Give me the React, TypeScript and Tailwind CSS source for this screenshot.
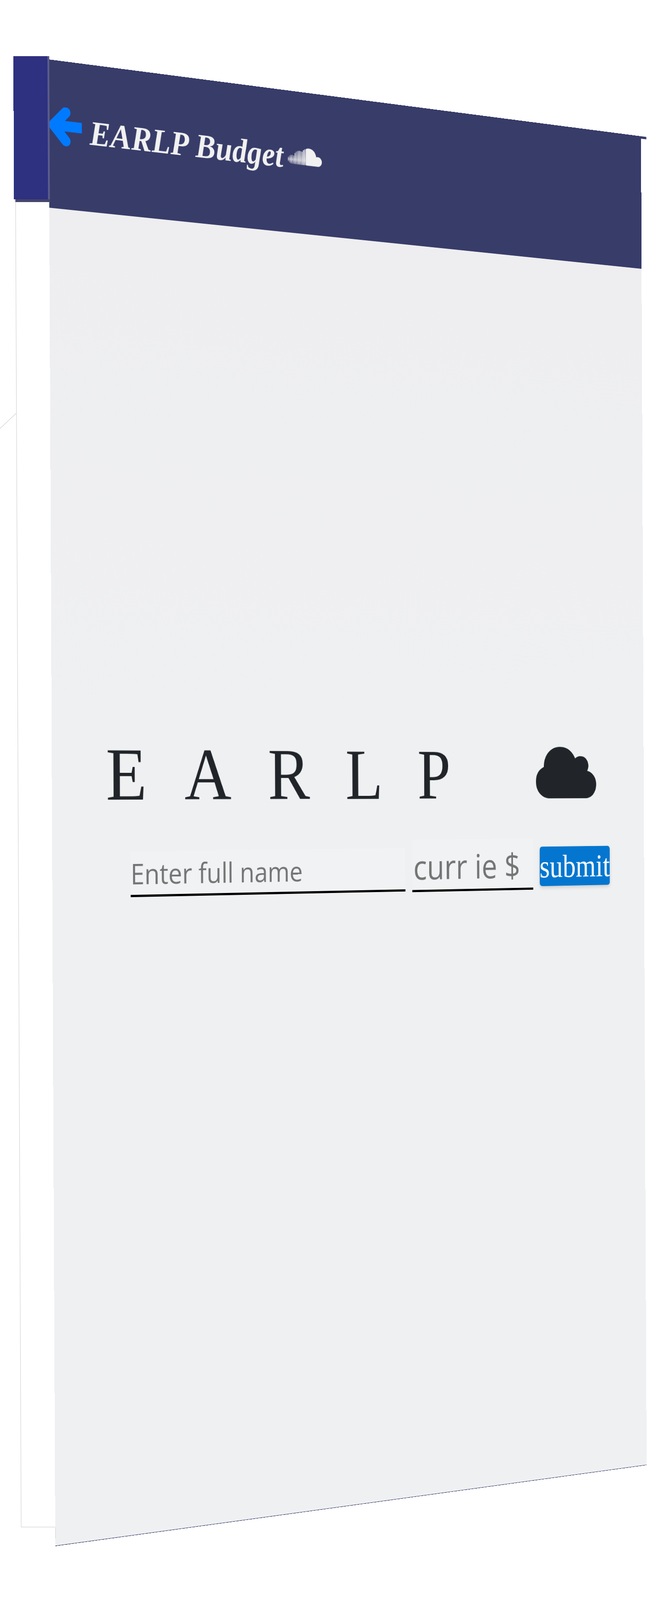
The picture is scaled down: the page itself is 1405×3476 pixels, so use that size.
import React from "react";
import { FaSoundcloud } from "react-icons/fa";

type Pt = [number, number];

// Maps a flat w×h box onto a four-cornered shape (TL, TR, BR, BL), as the tilted page in the picture.
function warp(w: number, h: number, ox: number, oy: number, q: Pt[]): string {
  const [x0, y0] = [q[0][0] - ox, q[0][1] - oy];
  const [x1, y1] = [q[1][0] - ox, q[1][1] - oy];
  const [x2, y2] = [q[2][0] - ox, q[2][1] - oy];
  const [x3, y3] = [q[3][0] - ox, q[3][1] - oy];
  const dx1 = x1 - x2, dx2 = x3 - x2, sx = x0 - x1 + x2 - x3;
  const dy1 = y1 - y2, dy2 = y3 - y2, sy = y0 - y1 + y2 - y3;
  const den = dx1 * dy2 - dx2 * dy1;
  const g = (sx * dy2 - dx2 * sy) / den;
  const k = (dx1 * sy - sx * dy1) / den;
  const a = x1 - x0 + g * x1, b = x3 - x0 + k * x3;
  const d = y1 - y0 + g * y1, e = y3 - y0 + k * y3;
  return `matrix3d(${a / w},${d / w},0,${g / w},${b / h},${e / h},0,${k / h},0,0,1,0,${x0},${y0},0,1)`;
}

const asideTransform = warp(74, 3196, 32, 122, [[32, 122], [106, 122], [119.5, 3318], [45.5, 3318]]);
const mainTransform = warp(1600, 3230, 106, 129, [[105.5, 129], [1392, 296], [1404, 3183], [120, 3359]]);

function BackArrow() {
  return (
    <svg viewBox="0 0 82 92" className="h-[92px] w-[82px] flex-none" fill="none" stroke="#007bff" strokeWidth="23">
      <path d="M41 11L11 41L41 73" strokeLinecap="round" strokeLinejoin="round" />
      <path d="M13 41H80" />
    </svg>
  );
}

function Cloud() {
  return (
    <svg viewBox="0 0 132 112" preserveAspectRatio="none" className="mb-[27px] ml-[148px] h-[123px] w-[178px] flex-none" fill="#212529">
      <path d="M30 112C12 112 0 96 0 76C0 60 6 50 17 44C17 18 32 0 52 0C68 0 79 10 85 25C88 22 92 20 97 20C107 20 114 30 114 41C114 45 113 49 111 52C123 55 131 67 131 81C131 99 121 112 107 112Z" />
    </svg>
  );
}

export default function App() {
  return (
    <div className="relative flex h-[3476px] w-[1405px] items-start overflow-hidden bg-white pl-[32px] pt-[122px]">
      <svg className="absolute left-0 top-[895px] h-[40px] w-[36px]" viewBox="0 0 36 40">
        <line x1="0" y1="36" x2="35" y2="3" stroke="#bdbdbd" strokeWidth="1" />
      </svg>

      <aside
        className="relative z-10 flex h-[3196px] w-[74px] flex-none origin-top-left flex-col border-b border-l border-[#cfcfcf]"
        style={{ transform: asideTransform }}
      >
        <div className="-ml-[4px] flex h-[311px] flex-none">
          <div className="w-[74px] flex-none bg-[#2e3080]" />
          <div className="w-[4px] flex-none bg-[#5c5c8c]" />
        </div>
        <div className="-ml-[1px] h-[6px] w-[76px] flex-none bg-[#45466a]" />
      </aside>

      <main
        className="relative mt-[7px] flex h-[3230px] w-[1600px] flex-none origin-top-left flex-col border-b border-[#373c69]"
        style={{ transform: mainTransform }}
      >
        <header className="relative flex h-[322px] flex-none items-center bg-[#373c69] pb-[30px]">
          <BackArrow />
          <span className="ml-[17px] mt-[6px] whitespace-nowrap font-['Liberation_Serif',serif] text-[77px] font-bold italic leading-none text-[#f1f1f1]">
            EARLP Budget
          </span>
          <FaSoundcloud className="ml-[13px] h-[72px] w-[90px] flex-none text-[#f1f1f1]" />
          <div className="absolute left-full top-0 h-[6px] w-[16px] bg-[#373c69]" />
        </header>

        <div className="relative flex flex-1 flex-col bg-linear-to-b from-[#eeeef0] to-[#eff0f2] to-40% pt-[1147px]">
          <div className="absolute left-0 top-[2867px] h-[24px] w-px bg-[#cccccc]" />

          <h1 className="flex items-end pl-[132px] font-['Liberation_Serif',serif] text-[166px] font-normal leading-none tracking-[95px] text-[#212529]">
            <span className="whitespace-nowrap">EARLP</span>
            <Cloud />
          </h1>

          <form className="mt-[68px] flex items-end gap-[19px] pl-[192px]">
            <div className="mb-[2px] h-[101px] w-[719px] flex-none border-b-[5px] border-black bg-[#f1f2f4] pt-[18px] font-['Open_Sans',sans-serif] text-[62px] leading-none text-[#737574]">
              Enter full name
            </div>
            <div className="h-[122px] w-[342px] flex-none border-b-[5px] border-black bg-[#f1f2f4] pl-[3px] pt-[23px] font-['Open_Sans',sans-serif] text-[79px] leading-none text-[#737574]">
              curr ie $
            </div>
            <button
              type="button"
              className="mb-[8px] flex h-[94px] w-[206px] flex-none items-center justify-center overflow-hidden rounded-[7px] bg-[#0476cf] font-['Liberation_Serif',serif] text-[76px] leading-none text-white shadow-[0_4px_8px_rgba(0,0,0,0.15)]"
            >
              submit
            </button>
          </form>
        </div>
      </main>
    </div>
  );
}
